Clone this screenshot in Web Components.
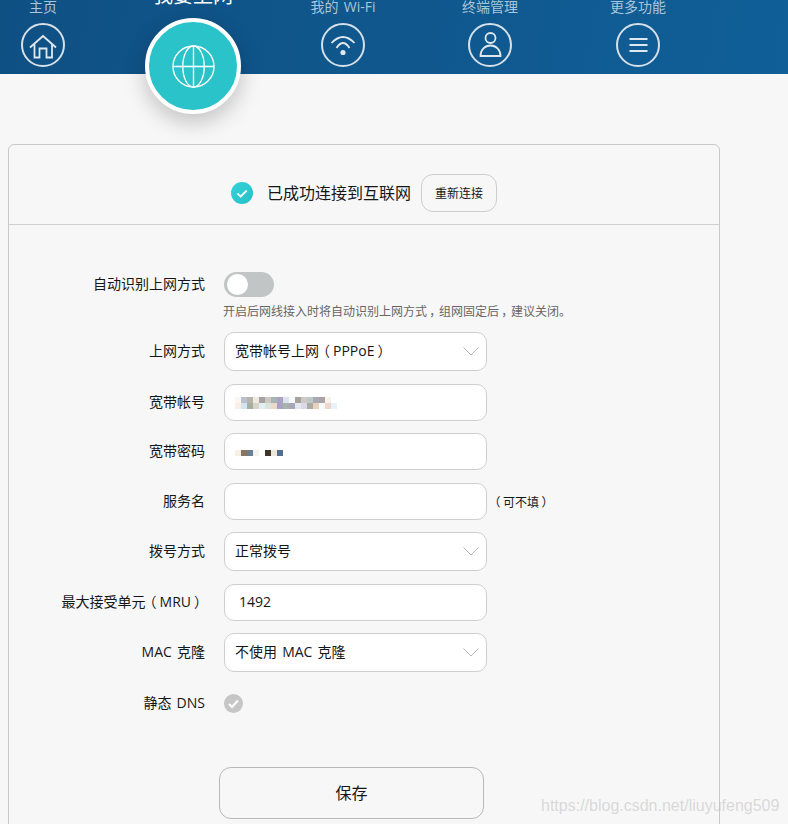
<!DOCTYPE html>
<html lang="zh-CN">
<head>
<meta charset="utf-8">
<title>我要上网</title>
<style>
html,body{ margin:0; height:100%; overflow:hidden; background:#f7f7f7; }
body{ font-family:"Open Sans","Noto Sans CJK SC",sans-serif; color:#161616; word-spacing:1.5px; }
</style>
</head>
<body>
<router-page>
    <top-nav slot="nav">
        <nav-item label="主页" icon="home"></nav-item>
        <nav-item label="我要上网" icon="globe" active></nav-item>
        <nav-item label="我的 Wi-Fi" icon="wifi"></nav-item>
        <nav-item label="终端管理" icon="user" style="margin-left:-3px"></nav-item>
        <nav-item label="更多功能" icon="menu" style="margin-left:-2px"></nav-item>
    </top-nav>
    <form-card>
        <status-bar slot="status" text="已成功连接到互联网" action="重新连接"></status-bar>

        <form-row label="自动识别上网方式" style="margin-bottom:8px"><toggle-switch></toggle-switch></form-row>
        <form-note style="margin-bottom:13px">开启后网线接入时将自动识别上网方式<i>，</i>组网固定后<i>，</i>建议关闭。</form-note>
        <form-row label="上网方式" style="margin-bottom:13px"><select-box value="宽带帐号上网（PPPoE）"></select-box></form-row>
        <form-row label="宽带帐号" style="margin-bottom:12px"><text-box><mosaic-blur kind="account"></mosaic-blur></text-box></form-row>
        <form-row label="宽带密码" style="margin-bottom:13px"><text-box><mosaic-blur kind="password" style="margin-top:2px"></mosaic-blur></text-box></form-row>
        <form-row label="服务名" hint="（可不填）" style="margin-bottom:12px"><text-box></text-box></form-row>
        <form-row label="拨号方式" style="margin-bottom:13px"><select-box value="正常拨号"></select-box></form-row>
        <form-row label="最大接受单元（MRU）" style="margin-bottom:12px"><text-box indent>1492</text-box></form-row>
        <form-row label="MAC 克隆" style="margin-bottom:22px"><select-box value="不使用 MAC 克隆"></select-box></form-row>
        <form-row label="静态 DNS" style="margin-bottom:54px"><check-mark></check-mark></form-row>
        <save-button>保存</save-button>
    </form-card>
    <water-mark slot="overlay">https://blog.csdn.net/liuyufeng509</water-mark>
</router-page>

<script>
;(function(document){
    'use strict';

    const ICONS = {
        home: '<path d="M9 24.500 22 13l13 11.500M13.500 21.500v13h5v-9h7v9H31v-13"/>',
        globe: '<circle cx="22" cy="22" r="21"/><ellipse cx="22" cy="22" rx="11" ry="21"/><path d="M22 1v42M1 22h42"/>',
        wifi: '<path d="M10.500 20Q22 8 33.500 20M15.500 25Q22 15 28.500 25"/><circle cx="22" cy="29.500" r="1.700" fill="currentColor"/>',
        user: '<circle cx="22.500" cy="15" r="5"/><path d="M12.500 33c0-6.500 4.500-10.500 10-10.500s10 4 10 10.500z"/>',
        menu: '<path d="M13.500 16h18M13.500 22h18M13.500 28h18"/>'
    };

    // fullwidth punctuation sits centred in its box in the reference:
    // palt trims the glyph to its ink, then centre it in a 1em box
    const PUNCT_CSS = 'display:inline-block; width:1em; text-align:center; font-feature-settings:"palt"; font-style:normal;';
    function parens(text){
        return text.replace(/[（）]/g, '<span class="p">$&</span>');
    }

    // simple helper, every element just renders a string into its shadow root
    class Base extends HTMLElement{
        constructor(){
            super();
            this.root = this.attachShadow({ mode: 'open' });
        }
        connectedCallback(){
            this.root.innerHTML = this.render();
        }
        attr(name){
            return this.getAttribute(name) || '';
        }
    }

    customElements.define('router-page', class extends Base{
        render(){
            return `
                <style>
                :host{ display:block; position:relative; height:824px; overflow:hidden; }
                main{ padding:70px 68px 0 8px; }
                </style>
                <slot name="nav"></slot>
                <main><slot></slot></main>
                <slot name="overlay"></slot>
            `;
        }
    });

    customElements.define('top-nav', class extends Base{
        render(){
            return `
                <style>
                :host{
                    display:flex;
                    gap:64px;
                    height:74px;
                    position:relative;
                    z-index:1;
                    background:linear-gradient(100deg,#0f5083,#105f98);
                }
                </style>
                <slot></slot>
            `;
        }
    });

    customElements.define('nav-item', class extends Base{
        render(){
            let active = this.hasAttribute('active');
            return `
                <style>
                :host{
                    display:flex;
                    flex-direction:column;
                    align-items:center;
                    width:86px;
                    flex:none;
                    margin-top:${active ? -18 : -3}px;
                }
                .label{
                    font-size:${active ? 20 : 14}px;
                    line-height:${active ? 28 : 20}px;
                    height:${active ? 28 : 20}px;
                    white-space:nowrap;
                    color:${active ? '#fff' : '#a9c6da'};
                }
                .icon{
                    width:44px;
                    height:44px;
                    margin-top:${active ? 8 : 6}px;
                    border-radius:50%;
                    box-sizing:border-box;
                    flex:none;
                    color:#dfe8ef;
                }
                :host([active]) .icon{
                    width:96px;
                    height:96px;
                    padding:22.500px;
                    background:#2ac3c9;
                    border:4px solid #fff;
                    color:#fff;
                    box-shadow:0 8px 22px rgba(0,0,0,.22);
                }
                .icon.ring{ border:2px solid #d5e0e9; }
                svg{ display:block; width:100%; height:100%; fill:none; stroke:currentColor; stroke-width:${active ? 1.400 : 1.800}; }
                .ring svg{ margin:-2px; width:44px; height:44px; }
                </style>
                <div class="label">${this.attr('label')}</div>
                <div class="icon ${active ? '' : 'ring'}">
                    <svg viewBox="0 0 44 44">${ICONS[this.attr('icon')]}</svg>
                </div>
            `;
        }
    });

    customElements.define('form-card', class extends Base{
        render(){
            return `
                <style>
                :host{
                    display:block;
                    box-sizing:border-box;
                    height:760px;
                    border:1px solid #c9c9c9;
                    border-radius:6px;
                }
                .body{ padding:47px 0 0 0; }
                </style>
                <slot name="status"></slot>
                <div class="body"><slot></slot></div>
            `;
        }
    });

    customElements.define('status-bar', class extends Base{
        render(){
            return `
                <style>
                :host{
                    display:flex;
                    justify-content:center;
                    align-items:center;
                    height:80px;
                    box-sizing:border-box;
                    padding:29px 0 12px;
                    border-bottom:1px solid #cfcfcf;
                    font-size:16px;
                }
                .check{
                    width:22px; height:22px; flex:none;
                    border-radius:50%;
                    background:linear-gradient(135deg,#33d3dc,#27bfc4);
                    margin-right:14px;
                }
                svg{ display:block; fill:none; stroke:#fff; stroke-width:1.800; }
                span{ padding-bottom:2px; }
                button{
                    font:inherit;
                    font-size:12px;
                    color:inherit;
                    width:76px; height:38px;
                    margin-left:10px;
                    padding:0;
                    background:transparent;
                    border:1px solid #cdcdcd;
                    border-radius:12px;
                }
                </style>
                <div class="check"><svg viewBox="0 0 22 22" width="22" height="22"><path d="M6.500 11.500l3.200 3 6-6"/></svg></div>
                <span>${this.attr('text')}</span>
                <button>${this.attr('action')}</button>
            `;
        }
    });

    customElements.define('form-row', class extends Base{
        render(){
            let hint = this.attr('hint');
            return `
                <style>
                :host{ display:flex; align-items:center; font-size:14px; }
                .label{ width:196px; flex:none; text-align:right; white-space:nowrap; margin-right:19px; line-height:14px; padding-bottom:2px; }
                .hint{ font-size:12px; margin-left:4px; white-space:nowrap; }
                .p{ ${PUNCT_CSS} }
                </style>
                <div class="label">${parens(this.attr('label'))}</div>
                <slot></slot>
                ${hint ? `<span class="hint">${parens(hint)}</span>` : ''}
            `;
        }
    });

    customElements.define('form-note', class extends Base{
        render(){
            return `
                <style>
                :host{ display:block; margin-left:214px; font-size:12px; line-height:14px; color:#666; white-space:nowrap; }
                ::slotted(i){ ${PUNCT_CSS} }
                </style>
                <slot></slot>
            `;
        }
    });

    customElements.define('toggle-switch', class extends Base{
        render(){
            return `
                <style>
                :host{ display:block; width:50px; height:25px; box-sizing:border-box; padding:2px 3px; border-radius:13px; background:#c2c5c5; }
                i{ display:block; width:21px; height:21px; border-radius:50%; background:#fff; }
                </style>
                <i></i>
            `;
        }
    });

    customElements.define('select-box', class extends Base{
        render(){
            return `
                <style>
                :host{
                    display:flex;
                    align-items:center;
                    justify-content:space-between;
                    box-sizing:border-box;
                    width:263px;
                    height:39px;
                    padding:0 7px 0 10px;
                    background:#fff;
                    border:1px solid #cfcfcf;
                    border-radius:10px;
                    font-size:14px;
                }
                .v{ padding-bottom:4px; }
                svg{ display:block; fill:none; stroke:#b9b9b9; stroke-width:1; }
                .p{ ${PUNCT_CSS} }
                </style>
                <span class="v">${parens(this.attr('value'))}</span>
                <svg width="16" height="9" viewBox="0 0 16 9"><path d="M.5.5 8 8 15.500.5"/></svg>
            `;
        }
    });

    customElements.define('text-box', class extends Base{
        render(){
            return `
                <style>
                :host{
                    display:flex;
                    align-items:center;
                    box-sizing:border-box;
                    width:263px;
                    height:37px;
                    padding:0 10px;
                    background:#fff;
                    border:1px solid #cfcfcf;
                    border-radius:10px;
                    font-size:14px;
                }
                :host([indent]){ padding:0 10px 2px 14px; }
                </style>
                <slot></slot>
            `;
        }
    });

    // the reference has these values pixelated out, so draw the same squares
    const MOSAIC = {
        account: [
            ['#fbf6ef','#bcc0cd','#b3b5ac','#efe9df','#a5a2a3','#cfc8c2','#a6b5b3','#aaa3bf','#dce3ee','#f7fbfd','#a8a09d','#cdc9c5','#bcc9c7','#aaa8b0','#aba4a7','#f7f2ea',''],
            ['#fbeee6','#d2e3f2','#a8ada1','#d9d4c9','#e3eff3','#dde3df','#ecd9cc','#a8a2c2','#a8b3ab','#a9a4b7','#e2e7f0','#dad9e8','#adaaa4','#e7d2bb','#f8fafa','#efd8cb','#e8f2f8']
        ],
        password: [
            ['#f8efe3','#8b7662','#6a8092','#f3f3ef','','#3e3428','#efe7dc','#52708a']
        ]
    };

    customElements.define('mosaic-blur', class extends Base{
        render(){
            let rows = MOSAIC[this.attr('kind')];
            return `
                <style>
                :host{ display:block; }
                div{ display:flex; }
                i{ display:block; width:6px; height:6px; }
                </style>
                ${rows.map(row => '<div>' + row.map(c => `<i style="background:${c || 'transparent'}"></i>`).join('') + '</div>').join('')}
            `;
        }
    });

    customElements.define('check-mark', class extends Base{
        render(){
            return `
                <style>
                :host{ display:block; width:19px; height:19px; border-radius:50%; background:#c6c6c6; }
                svg{ display:block; fill:none; stroke:#fff; stroke-width:2; }
                </style>
                <svg viewBox="0 0 19 19" width="19" height="19"><path d="M5 10l3 3 6-6.500"/></svg>
            `;
        }
    });

    customElements.define('save-button', class extends Base{
        render(){
            return `
                <style>
                :host{
                    display:flex;
                    align-items:center;
                    justify-content:center;
                    box-sizing:border-box;
                    width:265px;
                    height:52px;
                    margin-left:210px;
                    padding-bottom:3px;
                    border:1px solid #b8b8b8;
                    border-radius:12px;
                    font-size:16px;
                }
                </style>
                <slot></slot>
            `;
        }
    });

    customElements.define('water-mark', class extends Base{
        render(){
            return `
                <style>
                :host{
                    position:absolute;
                    left:541px;
                    top:796px;
                    font:16px/20px "Liberation Sans",sans-serif;
                    color:rgba(190,190,190,.55);
                    white-space:nowrap;
                }
                </style>
                <slot></slot>
            `;
        }
    });
})(document);
</script>
</body>
</html>
